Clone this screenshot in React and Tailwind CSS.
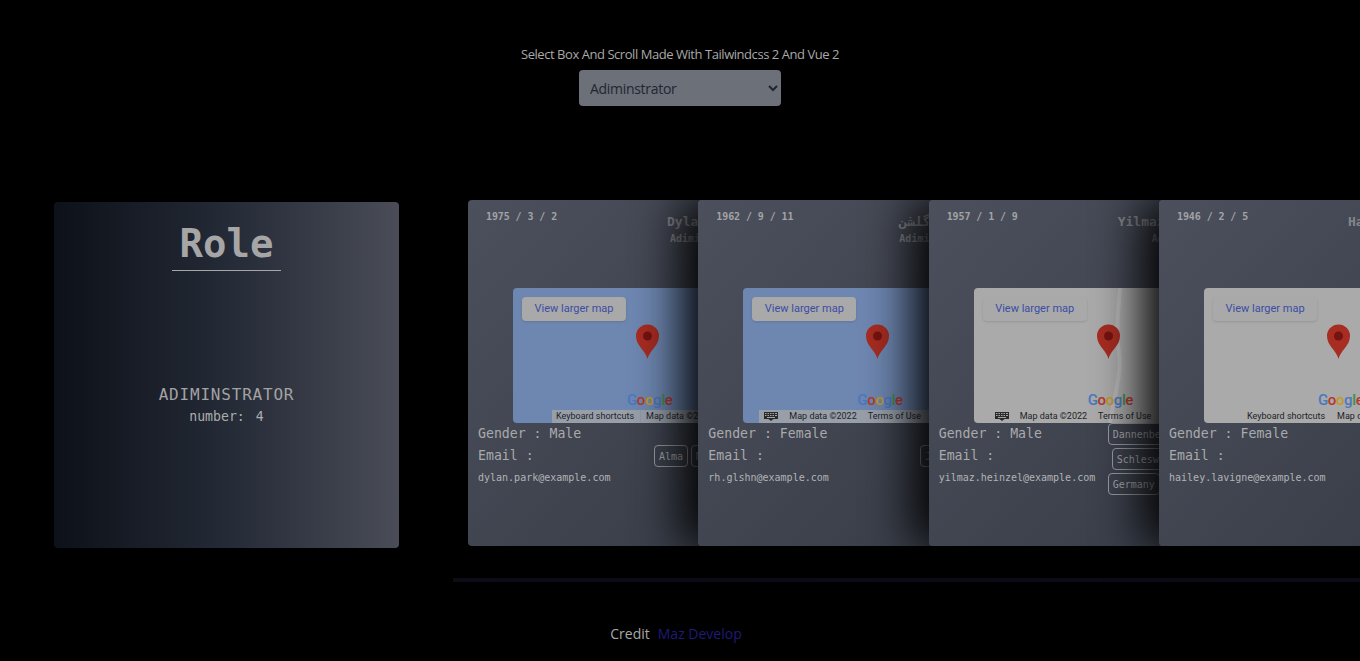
const mono = { fontFamily: '"DejaVu Sans Mono", monospace' };

const people = [
  {
    date: '1975 / 3 / 2',
    name: 'Dylan Park',
    namePad: 'pl-[10px]',
    subPad: 'pl-[13px]',
    gender: 'Male',
    email: 'dylan.park@example.com',
    water: true,
    footer: 'shortcuts',
    tagsPos: 'ml-[7px] mt-[22px] flex-row gap-[3px]',
    tags: ['Alma', 'Michigan'],
  },
  {
    date: '1962 / 9 / 11',
    name: 'رهام گلشن',
    namePad: 'pl-[12px]',
    subPad: 'pl-[12px]',
    gender: 'Female',
    email: 'rh.glshn@example.com',
    water: true,
    footer: 'keys',
    tagsPos: 'ml-[43px] mt-[22px] flex-row gap-[3px]',
    tags: ['Jahrom'],
  },
  {
    date: '1957 / 1 / 9',
    name: 'Yilmaz Heinzel',
    namePad: 'pl-0',
    subPad: 'pl-[34px]',
    gender: 'Male',
    email: 'yilmaz.heinzel@example.com',
    water: false,
    road: true,
    footer: 'keys',
    tagsPos: 'ml-0 mt-0 flex-col gap-[3px] items-start',
    tags: ['Dannenberg', 'Schleswig-Holstein', 'Germany'],
  },
  {
    date: '1946 / 2 / 5',
    name: 'Hailey Lavigne',
    namePad: 'pl-0',
    subPad: 'pl-[34px]',
    gender: 'Female',
    email: 'hailey.lavigne@example.com',
    water: false,
    footer: 'shortcuts',
    tagsPos: 'ml-0 mt-[22px] flex-row gap-[3px]',
    tags: [],
  },
];

const Pin = () => (
  <svg className="absolute left-[122px] top-[36px] w-[25px] h-[35px]" viewBox="0 0 25 35">
    <path d="M12.5 35C11 27 1 22 1 12a11.5 11.5 0 0123 0c0 10-10 15-11.5 23z" fill="#a72c22" />
    <circle cx="12.5" cy="12" r="4.5" fill="#741310" />
  </svg>
);

const KeyboardIcon = () => (
  <svg className="w-[14px] h-[9px] shrink-0" viewBox="0 0 14 9" fill="#2a2a2a">
    <path d="M0 0h14v7H9.5L7 9 4.5 7H0z" />
    <path fill="#a3a5a8" d="M1 1h1.5v1H1zM3.5 1H5v1H3.5zM6 1h1.500v1H6zM8.500 1H10v1H8.500zM11 1h2v1h-2zM1 3h1.500v1H1zM3.500 3H5v1H3.500zM6 3h1.500v1H6zM8.500 3H10v1H8.500zM11 3h2v1h-2zM3 5h8v1H3z" />
  </svg>
);

const MapFooter = ({ kind, water }) => {
  const bg = water ? 'bg-[#a3a5a8]/80' : 'bg-transparent';
  if (kind === 'keys') {
    return (
      <div className={`absolute left-[16px] right-0 bottom-0 h-[13px] flex items-center pl-[5px] text-[9px] text-[#1e2228] whitespace-nowrap ${bg}`}>
        <KeyboardIcon />
        <span className="ml-[11px]">Map data ©2022</span>
        <span className="ml-[11px]">Terms of Use</span>
      </div>
    );
  }
  return (
    <div className={`absolute left-[39px] right-0 bottom-0 h-[13px] flex items-center text-[9px] text-[#1e2228] whitespace-nowrap ${bg}`}>
      <span className={`pl-[4px] pr-[6px] border-r ${water ? 'border-[#8b97ad]' : 'border-transparent'}`}>Keyboard shortcuts</span>
      <span className="pl-[5px]">Map data ©2022</span>
    </div>
  );
};

const MapBox = ({ person }) => (
  <div
    className={`relative ml-[45px] w-[230px] h-[135px] rounded-l overflow-hidden ${person.water ? 'bg-[#6e87b1]' : 'bg-[#a9aaa9]'}`}
    style={{ fontFamily: 'Roboto, sans-serif' }}
  >
    {person.road && (
      <svg className="absolute inset-0 w-full h-full" viewBox="0 0 230 135" fill="none">
        <path d="M146 0c-2 25-4 45-1 65s-5 45-9 70" stroke="#b6b7b6" strokeWidth="4" />
      </svg>
    )}
    <div className="absolute left-[9px] top-[9px] w-[104px] h-[24px] rounded-sm bg-[#a9a9a9] flex items-center justify-center text-[11px] text-[#3b4da5] shadow-sm">
      View larger map
    </div>
    <Pin />
    <div className="absolute left-[114px] bottom-[13px] text-[15px] leading-5 font-medium tracking-[-0.4px]">
      <span className="text-[#4b78c0]">G</span>
      <span className="text-[#b8372c]">o</span>
      <span className="text-[#c29a22]">o</span>
      <span className="text-[#4b78c0]">g</span>
      <span className="text-[#3f8f4e]">l</span>
      <span className="text-[#b8372c]">e</span>
    </div>
    <MapFooter kind={person.footer} water={person.water} />
  </div>
);

const PersonCard = ({ person, first }) => (
  <div
    className={`relative w-[320px] h-[346px] shrink-0 rounded bg-gradient-to-br from-[#4c505c] to-[#363b46] shadow-[-1rem_0_3rem_#000] ${first ? '' : '-ml-[89.67px]'}`}
    style={mono}
  >
    <div className="flex h-[88px]">
      <div className="w-[189px] shrink-0 pl-[18px] pt-[11px] text-[10px] leading-3 font-bold tracking-[-0.1px] text-[#a1a3a6]">{person.date}</div>
      <div className="whitespace-nowrap">
        <div className={`pt-[14px] text-[13px] leading-4 font-bold text-[#84868b] ${person.namePad}`}>{person.name}</div>
        <div className={`pt-[3px] text-[10px] leading-3 font-bold text-[#84868b] ${person.subPad}`}>Adiminstrator</div>
      </div>
    </div>
    <MapBox person={person} />
    <div className="flex">
      <div className="w-[179px] shrink-0 pl-[10px] pt-[1px] flex flex-col gap-[2px] whitespace-nowrap text-[#a9aaac]">
        <div className="text-[13.2px] leading-5">Gender : {person.gender}</div>
        <div className="text-[13.2px] leading-5">Email :</div>
        <div className="text-[10px] leading-5 text-[#b2b3b5]">{person.email}</div>
      </div>
      <div className={`flex whitespace-nowrap ${person.tagsPos}`}>
        {person.tags.map((tag) => (
          <span
            key={tag}
            className={`h-[22px] px-[4px] flex items-center rounded border border-[#9a9b9d] text-[10px] text-[#a9aaac] ${tag === 'Schleswig-Holstein' ? 'ml-[4px]' : ''}`}
          >
            {tag}
          </span>
        ))}
      </div>
    </div>
  </div>
);

export default function App() {
  return (
    <div className="min-h-screen bg-black overflow-hidden" style={{ fontFamily: '"Open Sans", sans-serif' }}>
      <div className="pt-[44px] flex flex-col items-center">
        <h2 className="text-[13px] leading-5 tracking-[-0.45px] text-[#a8a8a8]">Select Box And Scroll Made With Tailwindcss 2 And Vue 2</h2>
        <select className="mt-[6px] w-[202px] h-[36px] rounded bg-[#6b7079] px-[7px] text-sm tracking-[-0.3px] text-[#1f2630] outline-none">
          <option>Adiminstrator</option>
          <option>User</option>
        </select>
      </div>

      <div className="mt-[94px] flex items-start">
        <div className="ml-[54px] mt-[2px] w-[345px] h-[346px] shrink-0 rounded bg-gradient-to-r from-[#0d1119] via-[#242a36] to-[#4a4d58] flex flex-col items-center" style={mono}>
          <h1 className="mt-[18px] w-[109px] pb-[3px] text-center text-[39px] leading-[47px] font-bold text-[#a6a6a6] border-b border-[#a6a6a6]">Role</h1>
          <div className="mt-[114px] text-base leading-5 tracking-wider text-[#a3a3a3]">ADIMINSTRATOR</div>
          <div className="mt-[2px] flex text-[13.2px] leading-5 text-[#adadad]">
            <span>number:</span>
            <span className="ml-[11px]">4</span>
          </div>
        </div>

        <div className="ml-[54px] flex-1 min-w-0 overflow-hidden">
          <div className="flex pl-[15px]">
            {people.map((person, i) => (
              <PersonCard key={person.email} person={person} first={i === 0} />
            ))}
          </div>
          <div className="mt-[32px] h-[4px] bg-[#0d0d18]"></div>
        </div>
      </div>

      <div className="mt-[42px] flex justify-center pr-[8px] text-sm leading-5">
        <span className="text-[#a8a8a8]">Credit</span>
        <a className="ml-[8px] text-[#1f1b78]" href="#">Maz Develop</a>
      </div>
    </div>
  );
}
